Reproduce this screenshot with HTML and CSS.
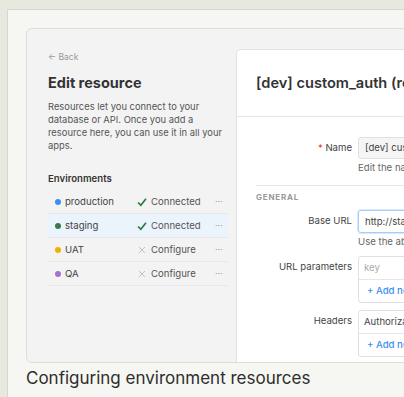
FILE: index.html
```html
<!DOCTYPE html>
<html lang="en">
<head>
    <meta charset="UTF-8">
    <meta name="viewport" content="width=device-width, initial-scale=1.0">
    <title>Configuring environment resources</title>
    <link rel="stylesheet" href="styles.css">
</head>
<body>
    <div class="frame">
        <div class="app">
            <div class="sidebar">
                <div class="back">&larr; Back</div>
                <h1>Edit resource</h1>
                <p class="intro">Resources let you connect to your database or API. Once you add a resource here, you can use it in all your apps.</p>
                <h2>Environments</h2>
                <div class="envs">
                    <div class="env">
                        <span class="dot blue"></span>
                        <span class="env-name">production</span>
                        <span class="status"><svg width="10" height="10" viewBox="0 0 10 10"><path d="M1 5.5 L3.8 8.2 L9 1.8" fill="none" stroke="#2f7a45" stroke-width="1.7"/></svg>Connected</span>
                        <span class="more">···</span>
                    </div>
                    <div class="env active">
                        <span class="dot green"></span>
                        <span class="env-name">staging</span>
                        <span class="status"><svg width="10" height="10" viewBox="0 0 10 10"><path d="M1 5.5 L3.8 8.2 L9 1.8" fill="none" stroke="#2f7a45" stroke-width="1.7"/></svg>Connected</span>
                        <span class="more">···</span>
                    </div>
                    <div class="env">
                        <span class="dot yellow"></span>
                        <span class="env-name">UAT</span>
                        <span class="status"><svg width="10" height="10" viewBox="0 0 10 10"><path d="M2 2 L8 8 M8 2 L2 8" fill="none" stroke="#c4c4c4" stroke-width="1"/></svg>Configure</span>
                        <span class="more">···</span>
                    </div>
                    <div class="env">
                        <span class="dot purple"></span>
                        <span class="env-name">QA</span>
                        <span class="status"><svg width="10" height="10" viewBox="0 0 10 10"><path d="M2 2 L8 8 M8 2 L2 8" fill="none" stroke="#c4c4c4" stroke-width="1"/></svg>Configure</span>
                        <span class="more">···</span>
                    </div>
                </div>
            </div>
            <div class="editor">
                <div class="editor-head">[dev] custom_auth (rest api)</div>
                <div class="form">
                    <div class="row">
                        <label><span class="req">*</span> Name</label>
                        <div>
                            <div class="input disabled">[dev] custom_auth</div>
                            <div class="hint">Edit the name of this resource</div>
                        </div>
                    </div>
                    <div class="section">General</div>
                    <div class="row">
                        <label>Base URL</label>
                        <div>
                            <div class="input focus">http://staging.example.com</div>
                            <div class="hint">Use the absolute base URL</div>
                        </div>
                    </div>
                    <div class="row">
                        <label>URL parameters</label>
                        <div class="kv">
                            <div class="kv-row placeholder">key</div>
                            <div class="kv-row add">+ Add new</div>
                        </div>
                    </div>
                    <div class="row">
                        <label>Headers</label>
                        <div class="kv">
                            <div class="kv-row">Authorization</div>
                            <div class="kv-row add">+ Add new</div>
                        </div>
                    </div>
                </div>
            </div>
        </div>
        <div class="caption">Configuring environment resources</div>
    </div>
</body>
</html>
```

FILE: styles.css
```css
body {
    margin: 0;
    background: #e7e8de;
    font-family: Inter, "Noto Sans", sans-serif;
    color: #333;
    overflow: hidden;
    height: 397px;
}
.frame {
    margin: 9px 0 0 7px;
    width: 460px;
    height: 400px;
    background: #f6f6f2;
    border: 1px solid #d6d7cd;
    padding: 18px 0 0 18px;
    box-sizing: border-box;
}
.app {
    display: flex;
    width: 440px;
    height: 335px;
    background: #f3f3f3;
    border: 1px solid #dcdcd8;
    border-radius: 6px;
    overflow: hidden;
    box-sizing: border-box;
}
.sidebar {
    width: 209px;
    flex-shrink: 0;
    padding: 21px 8px 0 21px;
    box-sizing: border-box;
}
.back {
    font-size: 8.5px;
    color: #999;
    height: 14px;
    line-height: 14px;
}
h1 {
    font-size: 14.5px;
    font-weight: 700;
    color: #333;
    margin: 10px 0 0 0;
    line-height: 18px;
}
.intro {
    font-size: 9.4px;
    line-height: 13px;
    color: #555;
    margin: 8px 0 0 0;
}
h2 {
    font-size: 9.6px;
    font-weight: 600;
    color: #333;
    margin: 20px 0 0 0;
    line-height: 14px;
}
.envs {
    margin-top: 4px;
}
.env {
    display: flex;
    align-items: center;
    height: 23px;
    border-bottom: 1px solid #e8e8e8;
    font-size: 9.6px;
    color: #444;
    padding-left: 7px;
}
.env.active { background: #ebf3fc; }
.dot {
    width: 6px;
    height: 6px;
    border-radius: 50%;
    margin-right: 4px;
}
.blue { background: #3a8ff2; }
.green { background: #3b7a4e; }
.yellow { background: #f1b000; }
.purple { background: #a472cf; }
.env-name { width: 72px; }
.status {
    display: flex;
    align-items: center;
    gap: 4px;
    width: 78px;
    color: #555;
}
.more {
    color: #999;
    font-size: 9px;
}
.editor {
    flex: 1;
    margin-top: 20px;
    background: #fff;
    border-top: 1px solid #e2e2e2;
    border-left: 1px solid #e2e2e2;
    border-radius: 5px 0 0 0;
    padding-left: 19px;
}
.editor-head {
    height: 66px;
    line-height: 66px;
    font-size: 14.6px;
    font-weight: 600;
    color: #333;
    white-space: nowrap;
    border-bottom: 1px solid #e6e6e6;
    margin-left: -19px;
    padding-left: 19px;
}
.form {
    padding-top: 20px;
}
.row {
    display: grid;
    grid-template-columns: 96px 1fr;
    column-gap: 6px;
    margin-bottom: 7px;
}
label {
    text-align: right;
    font-size: 9.6px;
    color: #444;
    line-height: 22px;
    white-space: nowrap;
}
.req { color: #e0413a; }
.input {
    height: 22px;
    line-height: 20px;
    box-sizing: border-box;
    border: 1px solid #e0e0e0;
    border-radius: 3px;
    padding-left: 6px;
    font-size: 9.6px;
    color: #444;
    white-space: nowrap;
    overflow: hidden;
}
.input.disabled { background: #f5f5f5; }
.input.focus {
    border-color: #a6cdf6;
    box-shadow: 0 0 0 1px #d9e9fb;
    height: 23px;
    line-height: 21px;
}
.hint {
    font-size: 9.6px;
    color: #666;
    margin-top: 3px;
    margin-bottom: 1px;
    white-space: nowrap;
    line-height: 12px;
}
.section {
    border-top: 1px solid #e6e6e6;
    margin-top: 10px;
    padding-top: 6px;
    height: 18px;
    font-size: 8px;
    font-weight: 700;
    letter-spacing: 0.8px;
    text-transform: uppercase;
    color: #999;
    line-height: 11px;
}
.kv {
    border: 1px solid #e0e0e0;
    border-radius: 3px;
    overflow: hidden;
}
.kv-row {
    height: 22px;
    line-height: 22px;
    padding-left: 5px;
    font-size: 9.6px;
    color: #444;
    white-space: nowrap;
}
.kv-row + .kv-row { border-top: 1px solid #e6e6e6; }
.kv-row.placeholder { color: #aaa; }
.kv-row.add {
    color: #3a8ff2;
    font-weight: 500;
    padding-left: 8px;
}
.caption {
    margin-top: 5px;
    font-size: 17px;
    color: #2e2e2e;
    line-height: 20px;
}
```
